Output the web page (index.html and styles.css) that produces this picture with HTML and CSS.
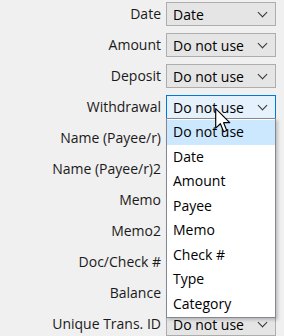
FILE: index.html
```html
<!DOCTYPE html>
<html lang="en">
<head>
    <meta charset="UTF-8">
    <title>Column mapping</title>
    <link rel="stylesheet" href="styles.css">
</head>
<body>
    <!-- Mappage des colonnes -->
    <div class="mapping">
        <label class="field">Date</label>
        <div class="combo"><span>Date</span><i class="chev"></i></div>

        <label class="field">Amount</label>
        <div class="combo"><span>Do not use</span><i class="chev"></i></div>

        <label class="field">Deposit</label>
        <div class="combo"><span>Do not use</span><i class="chev"></i></div>

        <label class="field">Withdrawal</label>
        <div class="combo open"><span>Do not use</span><i class="chev"></i>
            <ul class="droplist">
                <li class="selected">Do not use</li>
                <li>Date</li>
                <li>Amount</li>
                <li>Payee</li>
                <li>Memo</li>
                <li>Check #</li>
                <li>Type</li>
                <li>Category</li>
            </ul>
            <svg class="cursor" width="17" height="26" viewBox="0 0 13 20">
                <path d="M0.5 0.5 L0.5 15.5 L4.1 12.1 L6.6 18.3 L9 17.3 L6.6 11.3 L11.3 11.3 Z" fill="#fff" stroke="#000" stroke-width="0.9" stroke-linejoin="round"/>
            </svg>
        </div>

        <label class="field">Name (Payee/r)</label>
        <div class="combo"><span>Do not use</span><i class="chev"></i></div>

        <label class="field">Name (Payee/r)2</label>
        <div class="combo"><span>Do not use</span><i class="chev"></i></div>

        <label class="field">Memo</label>
        <div class="combo"><span>Do not use</span><i class="chev"></i></div>

        <label class="field">Memo2</label>
        <div class="combo"><span>Do not use</span><i class="chev"></i></div>

        <label class="field">Doc/Check #</label>
        <div class="combo"><span>Do not use</span><i class="chev"></i></div>

        <label class="field">Balance</label>
        <div class="combo"><span>Do not use</span><i class="chev"></i></div>

        <label class="field">Unique Trans. ID</label>
        <div class="combo"><span>Do not use</span><i class="chev"></i></div>
    </div>
</body>
</html>
```

FILE: styles.css
```css
/* Fond de fenêtre Windows */
body {
    margin: 0;
    padding: 0;
    background: #f0f0f0;
    color: #000000;
    font-family: 'Open Sans', 'Noto Sans', sans-serif;
    font-size: 14px;
    overflow: hidden;
}

/* Grille label / liste */
.mapping {
    display: grid;
    grid-template-columns: 1fr 110px;
    grid-auto-rows: 24px;
    column-gap: 5px;
    row-gap: 7px;
    padding: 2px 8px 0 0;
}

.field {
    text-align: right;
    line-height: 24px;
    white-space: nowrap;
    color: #1a1a1a;
}

/* Combo box */
.combo {
    position: relative;
    display: flex;
    align-items: center;
    justify-content: space-between;
    box-sizing: border-box;
    height: 24px;
    padding: 0 9px 0 6px;
    background: #e5e5e5;
    border: 1px solid #adadad;
}

.combo.open {
    background: #e5f1fb;
    border-color: #0078d7;
}

.chev {
    width: 6px;
    height: 6px;
    border-right: 1.5px solid #333333;
    border-bottom: 1.5px solid #333333;
    transform: rotate(45deg);
    margin-top: -4px;
}

/* Liste déroulante */
.droplist {
    position: absolute;
    top: 100%;
    left: -1px;
    z-index: 2;
    box-sizing: border-box;
    width: 110px;
    margin: 0;
    padding: 1px 0;
    list-style: none;
    background: #ffffff;
    border: 1px solid #828790;
    box-shadow: 2px 2px 3px rgba(0, 0, 0, 0.2);
}

.droplist li {
    height: 24.5px;
    line-height: 24.5px;
    padding-left: 6px;
}

.droplist li.selected {
    background: #cce8ff;
}

/* Pointeur de souris */
.cursor {
    position: absolute;
    left: 48px;
    top: 12px;
    z-index: 3;
}
```
